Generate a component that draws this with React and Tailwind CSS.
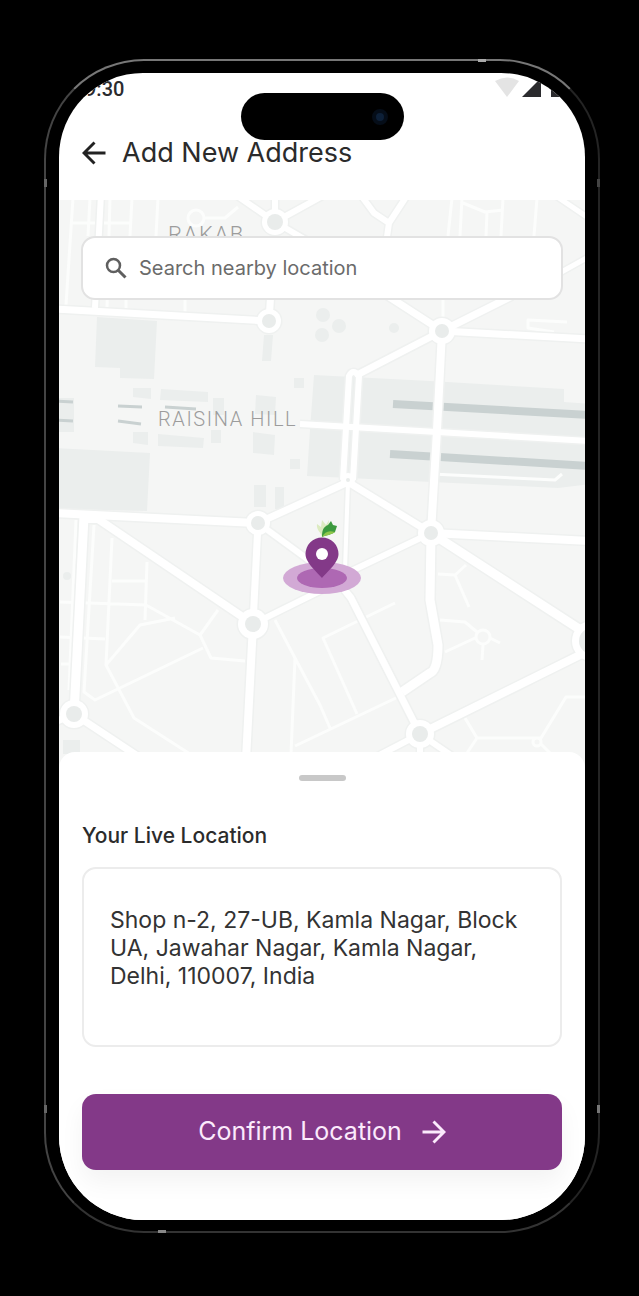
// src/App.jsx
import React, { useState } from 'react';

const ROADS = [
  { d: 'M55 309L269 321', w: 7 },
  { d: 'M269 321L271 290', w: 7 },
  { d: 'M275 222L236 195M275 222L326 194M275 222V194M275 222L306 240', w: 6 },
  { d: 'M101 194L95 308', w: 6 },
  { d: 'M360 194L374 213L389 223L408 194M389 223L386 244', w: 6 },
  { d: 'M556 196L590 219M556 275L590 256', w: 5 },
  { d: 'M442 331L380 291M442 331L512 296M442 331L355 376', w: 7 },
  { d: 'M442 331L590 339', w: 7 },
  { d: 'M442 331L437 430L431 533', w: 8 },
  { d: 'M300 424L590 441', w: 6 },
  { d: 'M343 480L349 376Q353 368 359 376L353 480', w: 6 },
  { d: 'M55 513L258 523', w: 8 },
  { d: 'M258 523L348 482L431 533', w: 7 },
  { d: 'M258 523L325 572', w: 6 },
  { d: 'M258 523L253 624', w: 7 },
  { d: 'M86 519H98L253 624', w: 8 },
  { d: 'M253 624L246 760', w: 8 },
  { d: 'M253 624L322 590M345 574L431 533', w: 6 },
  { d: 'M84 516L74 714', w: 9 },
  { d: 'M74 714L55 722M74 714L142 759', w: 7 },
  { d: 'M348 482L345 570', w: 4 },
  { d: 'M431 533L590 541', w: 8 },
  { d: 'M431 533L590 636', w: 9 },
  { d: 'M431 533L430 600L438 645Q438 670 430 673L402 692', w: 9 },
  { d: 'M343 588L351 598L420 734', w: 7 },
  { d: 'M420 734L590 650', w: 8 },
  { d: 'M420 734L370 760M420 734L458 760M420 734V760', w: 6 },
];

const ROUNDABOUTS = [
  [275, 222, 13, 8],
  [269, 321, 12, 7],
  [442, 331, 13, 7],
  [348, 480, 7, 2],
  [258, 523, 12, 7],
  [431, 533, 13, 7],
  [253, 624, 15, 8],
  [74, 714, 14, 8],
  [420, 734, 14, 8],
  [592, 641, 20, 13],
];

const LANES = [
  'M73 198L66 305M90 198L88 236M132 198L130 236M110 198L107 308M126 300V308M158 198L156 236M185 300V312M72 223H130',
  'M203 218H225L238 207M188 218a8 8 0 1 0 16 0a8 8 0 1 0 -16 0',
  'M452 198L448 236M462 198L460 236M463 203L485 212L503 210M487 212L486 236M503 198L501 236M537 198L534 236M443 300V320',
  'M567 322L528 320V328L554 332',
  'M76 520L69 690M94 525L84 692L95 700L203 648',
  'M112 538L106 665L134 718L190 754M147 562L145 620M112 581H146M60 602L146 605L200 635L218 610M60 637L105 639M106 665L140 625L175 618',
  'M200 635L211 658L245 661M61 664H69',
  'M275 620L295 658L320 705L330 728M295 658L291 754M295 746L398 697M395 603L323 638L357 714',
  'M438 574L455 575L469 607M455 575L466 565',
  'M440 620L465 622L477 632M475 638L445 652M490 638L500 643M483 645L482 660M476 637a7 7 0 1 0 14 0a7 7 0 1 0 -14 0',
  'M590 697H566L541 738L477 738L465 718M477 738L465 756M533 742a4 4 0 1 0 8 0a4 4 0 1 0 -8 0M541 744L552 755',
];

function StreetMap() {
  return (
    <svg viewBox="59 200 526 568" preserveAspectRatio="xMidYMin slice" className="absolute inset-0 h-full w-full" aria-hidden="true">
      <rect x="59" y="200" width="526" height="568" fill="#f5f6f5" />

      {/* Plots and parks */}
      <g fill="#ebeeed">
        <path d="M97 317L157 321L154 379L120 378V368L95 367Z" />
        <path d="M264 335L273 335L271 361L262 361Z" />
        <path d="M55 448L150 453L147 511L55 509Z" />
        <path d="M314 375L430 381L564 389V402L590 404V484L558 488L432 482L307 476L310 430Z" />
        <path d="M161 389L208 392V402L160 400ZM158 434L204 438L203 448L158 446ZM256 395L276 397L275 415L255 414ZM253 432L275 435L274 455L253 453Z" />
        <path d="M133 388H151V399L133 397ZM133 432H148V445L133 443ZM213 398H224V415H213ZM211 430H221V443H211ZM59 398H74V432H59Z" />
        <path d="M294 378h10v10h-10zM290 459h10v10h-10zM254 485h12v22h-12zM275 487h9v22h-9zM63 740h17v14h-17z" />
        <circle cx="323" cy="315" r="7" />
        <circle cx="339" cy="326" r="7" />
        <circle cx="322" cy="335" r="7" />
        <circle cx="394" cy="328" r="5" />
        <circle cx="67" cy="576" r="4" />
      </g>

      {/* Canals */}
      <g stroke="#c9d1d1" fill="none">
        <path d="M393 404L590 415M390 454L590 466" strokeWidth="8" />
        <path d="M55 401L73 402M55 420L73 421M118 406L142 407M118 421L141 424M165 407L196 409" strokeWidth="3" />
      </g>

      <g stroke="#fcfdfc" strokeWidth="3" fill="none" strokeLinejoin="round">
        {LANES.map((d) => <path key={d} d={d} />)}
        <path d="M432 474L555 480L562 474" />
      </g>

      <g stroke="#eff1f0" fill="none" strokeLinejoin="round">
        {ROADS.map((r) => <path key={r.d} d={r.d} strokeWidth={r.w + 3} />)}
        {ROUNDABOUTS.map(([x, y, r]) => <circle key={`${x}-${y}`} cx={x} cy={y} r={r} strokeWidth="3" />)}
      </g>
      <g stroke="#ffffff" fill="none" strokeLinejoin="round">
        {ROADS.map((r) => <path key={r.d} d={r.d} strokeWidth={r.w} />)}
      </g>
      {ROUNDABOUTS.map(([x, y, r, inner]) => (
        <g key={`${x}-${y}`}>
          <circle cx={x} cy={y} r={r} fill="#ffffff" />
          <circle cx={x} cy={y} r={inner} fill="#e9eceb" />
        </g>
      ))}

      <g className="font-['Roboto',sans-serif] font-light tracking-widest" fill="#9c9c9c">
        <text x="168" y="242" className="text-[22px]">RAKAB</text>
        <text x="158" y="426" className="text-[20px]">RAISINA HILL</text>
      </g>

      {/* Location pin */}
      <ellipse cx="322" cy="578" rx="39" ry="16" fill="#d2a9d5" />
      <ellipse cx="322" cy="578" rx="25" ry="10" fill="#ae68b3" />
      <path d="M322 578C318 573 305.500 563 305.500 554a16.500 16.500 0 0 1 33 0C338.500 563 326 573 322 578Z" fill="#833988" />
      <circle cx="322" cy="554" r="6" fill="#ffffff" />
      <path d="M322 537C321 532 316 530 317 524L321 527L322 520L326 525L329 520L328 530Z" fill="#dcebc0" />
      <path d="M322 537C322 531 323 527 328 525L331 521L333 525L337 526L335 532C331 535 327 535 322 537Z" fill="#3c9a3f" />
      <path d="M322 537C325 532 328 530 335 532C331 535 327 535 322 537Z" fill="#8fc64a" />
    </svg>
  );
}

function Arrow({ className }) {
  return (
    <svg viewBox="0 0 24 24" fill="none" stroke="currentColor" strokeWidth="2.9" className={className} aria-hidden="true">
      <path d="M23.500 12H2.500M12.500 1.500L2 12l10.500 10.500" />
    </svg>
  );
}

// Antenna breaks in the metal rim
function RimBreaks() {
  return (
    <>
      <div className="absolute -inset-x-0.5 inset-y-[118px] flex justify-between">
        <div className="flex flex-col justify-between">
          <span className="h-2 w-[3px] bg-[#666666]" />
          <span className="h-2 w-[3px] bg-[#666666]" />
        </div>
        <div className="flex flex-col justify-between">
          <span className="h-2 w-[3px] bg-[#444444]" />
          <span className="h-2 w-[3px] bg-[#777777]" />
        </div>
      </div>
      <div className="absolute inset-x-28 -inset-y-0.5 flex flex-col justify-between">
        <span className="h-[3px] w-2 self-end bg-[#aaaaaa]" />
        <span className="h-[3px] w-2 bg-[#888888]" />
      </div>
    </>
  );
}

function StatusBar() {
  return (
    <div className="flex h-7 items-start justify-between pt-1 pl-[26px]">
      <span className="font-['Roboto',sans-serif] text-[20px] leading-6 font-medium text-[#2b2b2e]">9:30</span>
      <svg viewBox="0 0 90 22" className="h-[22px] w-[90px]" aria-hidden="true">
        <path d="M0 4Q12 -3 24 4L12 20Z" fill="#e4e4e4" />
        <path d="M27 20L46 1V20Z" fill="#2b2b2e" />
        <path d="M56 3H60V0H65V3H69V20H56Z" fill="#2b2b2e" />
      </svg>
    </div>
  );
}

export default function App() {
  const [query, setQuery] = useState('');

  return (
    <div className="min-h-screen bg-black pt-[59px] pr-[39px] pb-[63px] pl-11 font-['Inter',sans-serif] antialiased">
      <div className="relative rounded-[100px] border-2 border-t-[#777777] border-r-[#242424] border-b-[#333333] border-l-[#444444] bg-black px-[13px] pt-3 pb-[11px]">
        <RimBreaks />

        <div className="relative overflow-hidden rounded-[84px] bg-white">
          {/* Camera cutout floats over the status bar and title */}
          <div className="absolute inset-x-0 z-20 flex justify-center pt-5">
            <div className="flex h-[47px] w-[163px] items-center justify-end rounded-full bg-black pr-4">
              <span className="h-4 w-4 rounded-full border-4 border-[#050d18] bg-[#0d2038]" />
            </div>
          </div>

          <StatusBar />

          <header className="flex h-[99px] items-center gap-4 px-[23px] pt-1">
            <button type="button" aria-label="Back" className="relative z-30 cursor-pointer text-[#222222]">
              <Arrow className="h-6 w-6" />
            </button>
            <h1 className="text-[27px] leading-9 text-[#2b2b2b]">Add New Address</h1>
          </header>

          <section className="relative h-[568px] px-[22px] pt-9">
            <StreetMap />
            <label className="relative flex h-16 items-center gap-3 rounded-[14px] border-2 border-[#e2e2e2] bg-white px-[22px]">
              <svg viewBox="0 0 22 22" fill="none" stroke="#5f5f5f" strokeWidth="2.500" className="h-[22px] w-[22px]" aria-hidden="true">
                <circle cx="8.500" cy="8.500" r="6.500" />
                <path d="M13 13L20.500 20.500" strokeWidth="3" />
              </svg>
              <input
                type="text"
                aria-label="Search nearby location"
                placeholder="Search nearby location"
                value={query}
                onChange={(e) => setQuery(e.target.value)}
                className="min-w-0 flex-1 bg-transparent text-[20px] leading-7 text-[#2b2b2b] placeholder-[#6b6b6b] outline-none"
              />
            </label>
          </section>

          {/* Bottom sheet */}
          <section className="relative -mt-4 flex flex-col rounded-t-[16px] bg-white px-[23px] pt-[23px] pb-[50px]">
            <div className="h-1.5 w-[47px] self-center rounded-full bg-[#c8c8c8]" />
            <div className="flex flex-col gap-4 pt-10">
              <h2 className="text-[21px] leading-[30px] font-medium text-[#2b2b2b]">Your Live Location</h2>
              <p className="min-h-[180px] rounded-[14px] border-2 border-[#ececec] px-[26px] pt-[37px] text-[23px] leading-7 text-[#333333]">
                Shop n-2, 27-UB, Kamla Nagar, Block UA, Jawahar Nagar, Kamla Nagar, Delhi, 110007, India
              </p>
            </div>
            <button
              type="button"
              className="mt-[47px] flex h-[76px] cursor-pointer items-center justify-center gap-5 rounded-[14px] bg-[#833988] text-[25px] text-[#fbeafc] shadow-[0_12px_24px_rgba(0,0,0,0.05)]"
            >
              Confirm Location
              <Arrow className="h-6 w-6 rotate-180" />
            </button>
          </section>
        </div>
      </div>
    </div>
  );
}
